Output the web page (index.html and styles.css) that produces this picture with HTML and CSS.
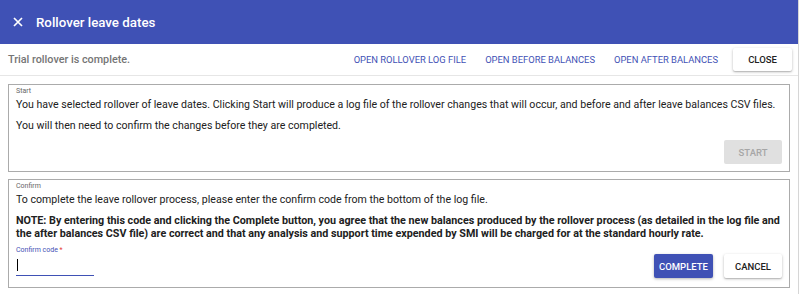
FILE: index.html
```html
<!DOCTYPE html>
<html>
<head>
<meta charset="utf-8">
<link rel="stylesheet" href="styles.css">
</head>
<body>
<div class="dialog">
  <header class="topbar">
    <svg class="close-icon" width="10" height="10" viewBox="0 0 10 10"><path d="M1 1L9 9M9 1L1 9" stroke="#fff" stroke-width="1.7" fill="none"/></svg>
    <span class="title">Rollover leave dates</span>
  </header>
  <div class="toolbar">
    <span class="status">Trial rollover is complete.</span>
    <span class="spacer"></span>
    <span class="link">Open rollover log file</span>
    <span class="link">Open before balances</span>
    <span class="link">Open after balances</span>
    <span class="btn raised close-btn">Close</span>
  </div>
  <section class="box start-box">
    <div class="legend">Start</div>
    <p class="para">You have selected rollover of leave dates. Clicking Start will produce a log file of the rollover changes that will occur, and before and after leave balances CSV files.</p>
    <p class="para">You will then need to confirm the changes before they are completed.</p>
    <div class="actions">
      <span class="btn disabled">Start</span>
    </div>
  </section>
  <section class="box confirm-box">
    <div class="legend">Confirm</div>
    <p class="para">To complete the leave rollover process, please enter the confirm code from the bottom of the log file.</p>
    <p class="para note">NOTE: By entering this code and clicking the Complete button, you agree that the new balances produced by the rollover process (as detailed in the log file and<br>the after balances CSV file) are correct and that any analysis and support time expended by SMI will be charged for at the standard hourly rate.</p>
    <div class="form-row">
      <div class="field">
        <div class="field-label">Confirm code <span class="req">*</span></div>
        <div class="field-input"><span class="caret"></span></div>
      </div>
      <span class="spacer"></span>
      <span class="btn primary">Complete</span>
      <span class="btn raised cancel-btn">Cancel</span>
    </div>
  </section>
</div>
</body>
</html>
```

FILE: styles.css
```css
html, body {
  margin: 0;
  padding: 0;
  background: #fff;
}
body {
  font-family: Roboto, "Liberation Sans", sans-serif;
  color: #212121;
}
.dialog {
  width: 799px;
  height: 294px;
  border-right: 1px solid #d6d6d6;
  box-sizing: border-box;
  overflow: hidden;
}
.topbar {
  height: 44px;
  background: #3f51b5;
  display: flex;
  align-items: center;
  padding-left: 13px;
  color: #fff;
}
.close-icon {
  display: block;
}
.title {
  margin-left: 13px;
  font-size: 13.3px;
  font-weight: 500;
}
.toolbar {
  height: 31px;
  display: flex;
  align-items: center;
  padding: 0 6px 0 8px;
  border-bottom: 1px solid #e6e6e6;
}
.status {
  font-size: 10.8px;
  font-weight: 500;
  color: #757575;
}
.spacer {
  flex: 1;
}
.link {
  font-size: 9.4px;
  font-weight: 400;
  text-transform: uppercase;
  color: #3f51b5;
  margin-left: 19px;
}
.btn {
  display: inline-flex;
  align-items: center;
  justify-content: center;
  height: 24px;
  width: 58px;
  font-size: 9.5px;
  font-weight: 500;
  text-transform: uppercase;
  border-radius: 2px;
  box-sizing: border-box;
}
.raised {
  background: #fff;
  color: #212121;
  box-shadow: 0 1px 3px rgba(0,0,0,0.25), 0 1px 1px rgba(0,0,0,0.12);
}
.close-btn {
  width: 59px;
  height: 23px;
  margin-left: 15px;
}
.box {
  margin: 8px 8px 0 8px;
  border: 1px solid #ababab;
  padding: 0 7px 7px 7px;
}
.legend {
  font-size: 7px;
  color: #666;
  line-height: 11px;
  padding-top: 1px;
}
.para {
  font-size: 10.6px;
  line-height: 13px;
  margin: 1px 0 8px 0;
}
.note {
  font-weight: 700;
  font-size: 10.75px;
  margin-bottom: 5px;
}
.actions {
  display: flex;
  justify-content: flex-end;
}
.disabled {
  background: #e0e0e0;
  color: #a6a6a6;
}
.confirm-box {
  margin-top: 7px;
  padding-bottom: 9px;
}
.form-row {
  display: flex;
  align-items: flex-end;
}
.field {
  width: 78px;
  margin-bottom: 2px;
}
.field-label {
  font-size: 7px;
  line-height: 10px;
  color: #3f51b5;
}
.req {
  color: #e53935;
}
.field-input {
  height: 20px;
  border-bottom: 1px solid #3f51b5;
  display: flex;
  align-items: center;
}
.caret {
  display: block;
  width: 1px;
  height: 12px;
  background: #000;
  margin-left: 1px;
}
.primary {
  background: #3f51b5;
  color: #fff;
  width: 59px;
  box-shadow: 0 1px 3px rgba(0,0,0,0.3);
}
.cancel-btn {
  margin-left: 11px;
}
```
